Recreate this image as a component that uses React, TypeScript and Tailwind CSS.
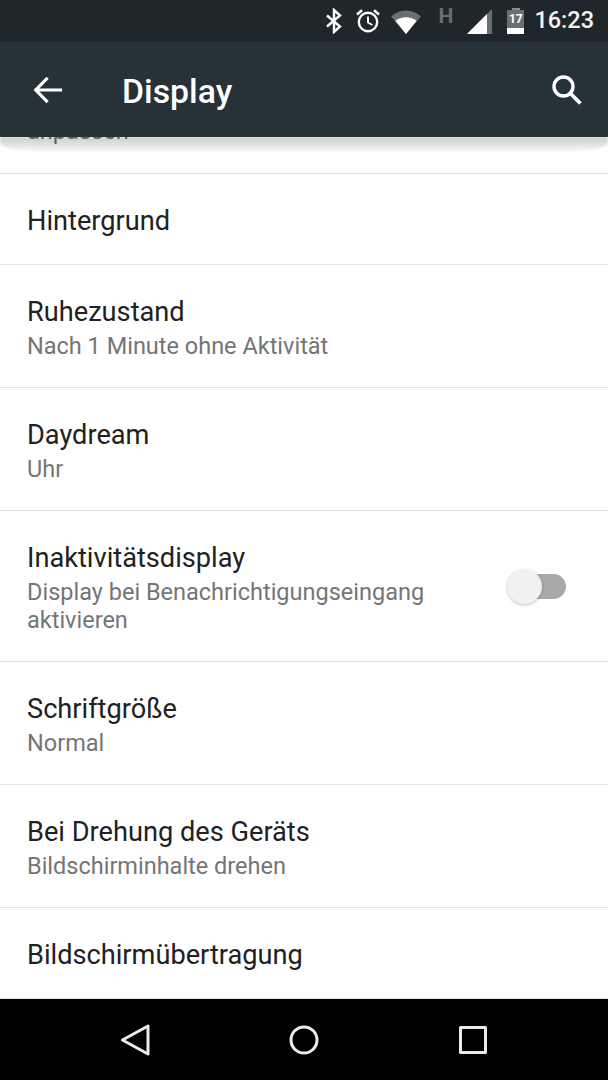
const rows = [
  { title: 'Hintergrund', h: 'h-[91px]' },
  { title: 'Ruhezustand', sub: 'Nach 1 Minute ohne Aktivität', h: 'h-[123px]' },
  { title: 'Daydream', sub: 'Uhr', h: 'h-[123px]' },
  { title: 'Inaktivitätsdisplay', sub: 'Display bei Benachrichtigungseingang aktivieren', h: 'h-[151px]', toggle: true },
  { title: 'Schriftgröße', sub: 'Normal', h: 'h-[123px]' },
  { title: 'Bei Drehung des Geräts', sub: 'Bildschirminhalte drehen', h: 'h-[123px]' },
  { title: 'Bildschirmübertragung', h: 'h-[91px]' },
];

function StatusIcons() {
  return (
    <div className="flex h-[42px] items-center justify-end bg-[#20272b] pr-[14px] text-white">
      <svg width="18" height="26" viewBox="0 0 18 26" className="mr-[12px]" fill="none" stroke="#fff" strokeWidth="2.4">
        <path d="M2 7.5 15 18.5 9 24V2l6 5.5L2 18.5" />
      </svg>
      <svg width="26" height="26" viewBox="0 0 26 26" className="mr-[10px]" fill="none" stroke="#fff" strokeWidth="2.4">
        <circle cx="13" cy="14" r="9.2" />
        <path d="M13 8.5V14.5L17.5 17" strokeWidth="2" />
        <path d="M2 6.5 7 2.2M24 6.5 19 2.2" strokeWidth="2.6" />
      </svg>
      <svg width="30" height="24" viewBox="0 0 30 24" className="mr-[18px] mt-[1px]">
        <path d="M0 6.5C8-1.5 22-1.5 30 6.5L15 24Z" fill="#6c6f71" />
        <path d="M4.5 11C10 6 20 6 25.5 11L15 24Z" fill="#fff" />
      </svg>
      <span className="relative top-[-5px] mr-[14px] font-['Roboto',sans-serif] text-[21px] leading-none font-bold text-[#6b6e70]">H</span>
      <svg width="25" height="25" viewBox="0 0 25 25" className="mr-[15px] mt-[1px]">
        <path d="M25 0V25H0Z" fill="#6c6f71" />
        <path d="M20 5V25H0Z" fill="#fff" />
      </svg>
      <div className="mr-[10px] flex h-[26px] w-[17px] flex-col items-center">
        <div className="h-[2px] w-2 bg-[#8a8c8e]" />
        <div className="flex h-[18px] w-[17px] items-center justify-center bg-[#6c6f71] font-['Roboto',sans-serif] text-[12px] leading-none font-bold text-white">17</div>
        <div className="h-[6px] w-[17px] bg-white" />
      </div>
      <span className="font-['Roboto',sans-serif] text-[23.5px] leading-none font-medium text-[#f4f4f4]">16:23</span>
    </div>
  );
}

function AppBar() {
  return (
    <div className="relative z-10 flex h-[95px] items-center bg-[#263238] pr-[25px] pl-[33px]">
      <svg width="30" height="28" viewBox="0 0 30 28" fill="none" stroke="#fff" strokeWidth="3.2" strokeLinecap="square">
        <path d="M27.5 14H3M13.5 3 2.8 14 13.5 25" />
      </svg>
      <span className="ml-[59px] flex-1 pt-[4px] font-['Roboto',sans-serif] text-[33.8px] leading-none font-medium text-white">Display</span>
      <svg width="32" height="32" viewBox="0 0 32 32" fill="none" stroke="#fff" strokeWidth="3.4">
        <circle cx="12.5" cy="12.5" r="9.5" />
        <path d="M19.5 19.5 29.5 29.5" strokeWidth="3.8" />
      </svg>
    </div>
  );
}

function Toggle() {
  return (
    <div className="relative ml-6 h-[38px] w-[62px] shrink-0">
      <div className="absolute top-[7px] right-[3px] h-[25px] w-[48px] rounded-full bg-[#a9a9a9]" />
      <div className="absolute top-[2px] left-0 h-[35px] w-[35px] rounded-full bg-[#f1f1f1] shadow-[0_1px_3px_rgba(0,0,0,0.25)]" />
    </div>
  );
}

export default function App() {
  return (
    <div className="flex h-[1080px] w-[608px] flex-col overflow-hidden bg-white font-['Roboto',sans-serif]">
      <StatusIcons />
      <AppBar />
      <div className="relative min-h-0 flex-1 overflow-hidden">
        <div className="pointer-events-none absolute top-0 right-0 left-0 z-10 h-[14px] rounded-b-[40px_8px] bg-gradient-to-b from-black/20 to-black/[0.04] blur-[1px]" />
        <div className="flex h-[37px] items-end justify-start border-b border-[#e3e3e3] px-[27px]">
          <span className="relative top-[-29px] text-[23.6px] leading-none text-[#757575]">anpassen</span>
        </div>
        {rows.map((row) => (
          <div key={row.title} className={`flex items-center justify-between border-b border-[#e3e3e3] pr-[39px] pl-[27px] ${row.h}`}>
            <div className="min-w-0 flex-1 pt-[4px]">
              <div className="text-[27.2px] leading-[32px] text-[#212121]">{row.title}</div>
              {row.sub && <div className="mt-[4px] text-[23.5px] leading-[28px] text-[#757575]">{row.sub}</div>}
            </div>
            {row.toggle && <Toggle />}
          </div>
        ))}
      </div>
      <div className="relative z-10 flex h-[81px] shrink-0 items-center bg-black pl-[119px]">
        <svg width="31" height="32" viewBox="0 0 31 32" fill="none" stroke="#ececec" strokeWidth="3" strokeLinejoin="round">
          <path d="M3.5 16 29 2V30Z" />
        </svg>
        <svg width="30" height="30" viewBox="0 0 30 30" fill="none" stroke="#ececec" strokeWidth="3" className="ml-[139px]">
          <circle cx="15" cy="15" r="13" />
        </svg>
        <svg width="28" height="28" viewBox="0 0 28 28" fill="none" stroke="#ececec" strokeWidth="3" strokeLinejoin="round" className="ml-[140px]">
          <rect x="1.5" y="1.5" width="25" height="25" />
        </svg>
      </div>
    </div>
  );
}
